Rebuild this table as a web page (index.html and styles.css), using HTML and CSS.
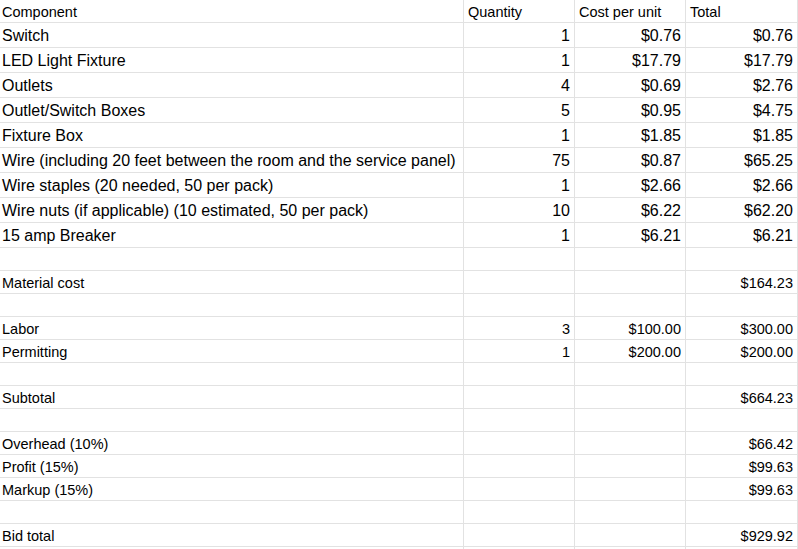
FILE: index.html
```html
<!DOCTYPE html>
<html>
<head>
<meta charset="utf-8">
<link rel="stylesheet" href="styles.css">
</head>
<body>
<table class="sheet">
  <colgroup>
    <col class="c-name"><col class="c-qty"><col class="c-cost"><col class="c-total">
  </colgroup>
  <tr class="head"><td>Component</td><td>Quantity</td><td>Cost per unit</td><td>Total</td></tr>
  <tr class="item"><td>Switch</td><td class="num">1</td><td class="num">$0.76</td><td class="num">$0.76</td></tr>
  <tr class="item"><td>LED Light Fixture</td><td class="num">1</td><td class="num">$17.79</td><td class="num">$17.79</td></tr>
  <tr class="item"><td>Outlets</td><td class="num">4</td><td class="num">$0.69</td><td class="num">$2.76</td></tr>
  <tr class="item"><td>Outlet/Switch Boxes</td><td class="num">5</td><td class="num">$0.95</td><td class="num">$4.75</td></tr>
  <tr class="item"><td>Fixture Box</td><td class="num">1</td><td class="num">$1.85</td><td class="num">$1.85</td></tr>
  <tr class="item"><td>Wire (including 20 feet between the room and the service panel)</td><td class="num">75</td><td class="num">$0.87</td><td class="num">$65.25</td></tr>
  <tr class="item"><td>Wire staples (20 needed, 50 per pack)</td><td class="num">1</td><td class="num">$2.66</td><td class="num">$2.66</td></tr>
  <tr class="item"><td>Wire nuts (if applicable) (10 estimated, 50 per pack)</td><td class="num">10</td><td class="num">$6.22</td><td class="num">$62.20</td></tr>
  <tr class="item"><td>15 amp Breaker</td><td class="num">1</td><td class="num">$6.21</td><td class="num">$6.21</td></tr>
  <tr class="sum"><td></td><td></td><td></td><td></td></tr>
  <tr class="sum"><td>Material cost</td><td></td><td></td><td class="num">$164.23</td></tr>
  <tr class="sum"><td></td><td></td><td></td><td></td></tr>
  <tr class="sum"><td>Labor</td><td class="num">3</td><td class="num">$100.00</td><td class="num">$300.00</td></tr>
  <tr class="sum"><td>Permitting</td><td class="num">1</td><td class="num">$200.00</td><td class="num">$200.00</td></tr>
  <tr class="sum"><td></td><td></td><td></td><td></td></tr>
  <tr class="sum"><td>Subtotal</td><td></td><td></td><td class="num">$664.23</td></tr>
  <tr class="sum"><td></td><td></td><td></td><td></td></tr>
  <tr class="sum"><td>Overhead (10%)</td><td></td><td></td><td class="num">$66.42</td></tr>
  <tr class="sum"><td>Profit (15%)</td><td></td><td></td><td class="num">$99.63</td></tr>
  <tr class="sum"><td>Markup (15%)</td><td></td><td></td><td class="num">$99.63</td></tr>
  <tr class="sum"><td></td><td></td><td></td><td></td></tr>
  <tr class="sum"><td>Bid total</td><td></td><td></td><td class="num">$929.92</td></tr>
  <tr class="sum"><td></td><td></td><td></td><td></td></tr>
</table>
</body>
</html>
```

FILE: styles.css
```css
html, body {
  margin: 0;
  padding: 0;
  background: #ffffff;
}

body {
  font-family: "Liberation Sans", Arial, sans-serif;
  color: #000000;
  overflow: hidden;
}

.sheet {
  table-layout: fixed;
  width: 798px;
  border-collapse: separate;
  border-spacing: 0;
}

.c-name { width: 464px; }
.c-qty { width: 111px; }
.c-cost { width: 111px; }
.c-total { width: 112px; }

.sheet td {
  box-sizing: border-box;
  border-right: 1px solid #e2e2e2;
  border-bottom: 1px solid #e2e2e2;
  padding: 0 4px 1px 2px;
  vertical-align: bottom;
  white-space: nowrap;
  overflow: hidden;
  line-height: 18px;
}

.sheet td.num {
  text-align: right;
}

.head td {
  height: 23px;
  font-size: 14.5px;
  padding-bottom: 1px;
  padding-left: 4px;
}

.head td:first-child {
  padding-left: 2px;
}

.item td {
  height: 25px;
  font-size: 16px;
  padding-bottom: 2px;
}

.sum td {
  height: 23px;
  font-size: 14.5px;
  padding-bottom: 1px;
}
```
